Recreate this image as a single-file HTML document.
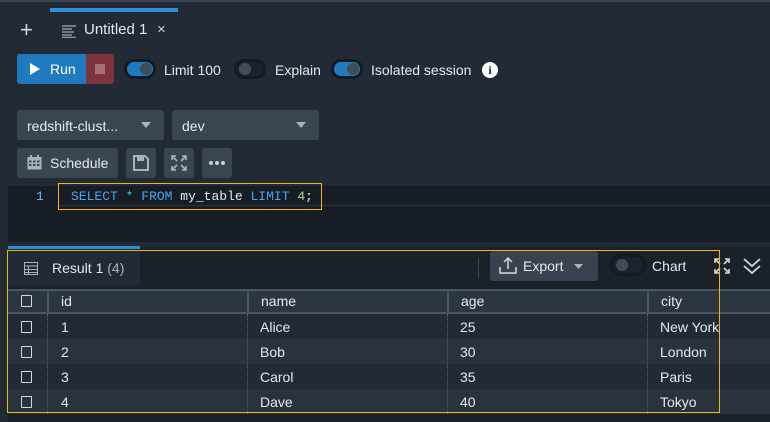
<!DOCTYPE html>
<html><head><style>
*{box-sizing:border-box;margin:0;padding:0}
body{width:770px;height:422px;background:#222a35;font-family:"Liberation Sans",sans-serif;color:#e6e9ec;position:relative;overflow:hidden;font-size:14px}
.a{position:absolute}
.btn{position:absolute;background:#3a4552;border-radius:3px}
.tg{position:absolute;width:32px;height:20px;border-radius:10px;border:3px solid #131a22}
.tg i{position:absolute;top:1px;width:12px;height:12px;border-radius:50%;background:#414c59}
.row{position:absolute;left:8px;width:762px;height:25px}
.c{position:absolute;font-size:14px;top:5px}
.cb{position:absolute;left:13px;top:7px;width:11px;height:12px;border:1px solid #d5d9de;border-radius:1px}
</style></head><body>
<div class="a" style="left:0;top:0;width:770px;height:2px;background:#3a4350"></div>
<div class="a" style="left:50px;top:8px;width:128px;height:4px;background:#2f8fd4"></div>
<div class="a" style="left:20px;top:17px;font-size:22px;color:#d5d9de">+</div>
<svg class="a" style="left:62px;top:24px" width="14" height="14"><g stroke="#8c96a0" stroke-width="1.6"><path d="M0 2H14M0 5H10M0 8H12M0 11H10M0 13.5H14"/></g></svg>
<div class="a" style="left:84px;top:21px;font-size:15px">Untitled 1</div>
<div class="a" style="left:157px;top:21px;font-size:15px;color:#c8cdd2">×</div>
<div class="a" style="left:17px;top:54px;width:69px;height:30px;background:#1f7ac0;border-radius:3px 0 0 3px"></div>
<svg class="a" style="left:30px;top:63px" width="10" height="12"><path d="M0 0L10 6L0 12Z" fill="#fff"/></svg>
<div class="a" style="left:50px;top:61px;font-size:14px;color:#fff">Run</div>
<div class="a" style="left:86px;top:54px;width:28px;height:30px;background:#7c343a;border-radius:0 3px 3px 0"></div>
<div class="a" style="left:95px;top:64px;width:10px;height:10px;background:#a47178"></div>
<div class="tg" style="left:124px;top:59px;background:#1f7ac0"><i style="left:13px"></i></div>
<div class="a" style="left:164px;top:62px">Limit 100</div>
<div class="tg" style="left:234px;top:59px;background:#1b222b"><i style="left:2px"></i></div>
<div class="a" style="left:275px;top:62px">Explain</div>
<div class="tg" style="left:331px;top:59px;background:#1f7ac0"><i style="left:13px"></i></div>
<div class="a" style="left:371px;top:62px">Isolated session</div>
<div class="a" style="left:482px;top:62px;width:16px;height:16px;border-radius:50%;background:#fff;color:#222a35;font-weight:bold;font-size:12px;text-align:center;line-height:16px;font-family:'Liberation Serif',serif">i</div>
<div class="btn" style="left:17px;top:110px;width:147px;height:30px"></div>
<div class="a" style="left:27px;top:118px">redshift-clust...</div>
<svg class="a" style="left:141px;top:122px" width="10" height="6"><path d="M0 0H10L5 6Z" fill="#aab3bc"/></svg>
<div class="btn" style="left:172px;top:110px;width:147px;height:30px"></div>
<div class="a" style="left:182px;top:118px">dev</div>
<svg class="a" style="left:296px;top:122px" width="10" height="6"><path d="M0 0H10L5 6Z" fill="#aab3bc"/></svg>
<div class="btn" style="left:17px;top:148px;width:101px;height:30px"></div>
<svg class="a" style="left:27px;top:155px" width="15" height="15"><rect x="0.5" y="2" width="14" height="12.5" fill="#aab3bc"/><g fill="#3a4552"><rect x="2" y="5.5" width="2.5" height="2"/><rect x="6" y="5.5" width="2.5" height="2"/><rect x="10" y="5.5" width="2.5" height="2"/><rect x="2" y="9" width="2.5" height="2"/><rect x="6" y="9" width="2.5" height="2"/><rect x="10" y="9" width="2.5" height="2"/></g><rect x="3" y="0" width="2" height="3" fill="#aab3bc"/><rect x="10" y="0" width="2" height="3" fill="#aab3bc"/></svg>
<div class="a" style="left:50px;top:155px">Schedule</div>
<div class="btn" style="left:126px;top:148px;width:30px;height:30px"></div>
<svg class="a" style="left:133px;top:155px" width="16" height="16"><path d="M1 1H12L15 4V15H1Z" fill="none" stroke="#aab3bc" stroke-width="2"/><rect x="4" y="2" width="7" height="4" fill="#aab3bc"/></svg>
<div class="btn" style="left:164px;top:148px;width:30px;height:30px"></div>
<svg class="a" style="left:171px;top:155px" width="16" height="16"><g stroke="#aab3bc" stroke-width="1.6" fill="none"><path d="M1 5V1H5M11 1H15V5M15 11V15H11M5 15H1V11M1 1L6 6M15 1L10 6M15 15L10 10M1 15L6 10"/></g></svg>
<div class="btn" style="left:202px;top:148px;width:30px;height:30px"></div>
<svg class="a" style="left:207px;top:160px" width="20" height="6"><g fill="#c8cdd2"><circle cx="4" cy="3" r="2"/><circle cx="10" cy="3" r="2"/><circle cx="16" cy="3" r="2"/></g></svg>
<div class="a" style="left:8px;top:186px;width:762px;height:56px;background:#161d25"></div>
<div class="a" style="left:58px;top:186px;width:712px;height:20px;border-bottom:1px solid #2a313a"></div>
<div class="a" style="left:36px;top:189px;font-family:'Liberation Mono',monospace;font-size:13px;color:#7fb3e0">1</div>
<div class="a" style="left:58px;top:183px;width:264px;height:27px;border:1px solid #f2b60e"></div>
<div class="a" style="left:71px;top:189px;font-family:'Liberation Mono',monospace;font-size:13px;color:#e6e9ec;white-space:pre"><span style="color:#4da3e8">SELECT</span> <span style="color:#3ed4b5">*</span> <span style="color:#4da3e8">FROM</span> my_table <span style="color:#4da3e8">LIMIT</span> <span style="color:#b5d58a">4</span>;</div>
<div class="a" style="left:8px;top:247px;width:762px;height:175px;background:#1a2129"></div>
<div class="a" style="left:8px;top:246px;width:132px;height:3px;background:#2f8fd4"></div>
<div class="a" style="left:8px;top:250px;width:132px;height:35px;background:#222a35"></div>
<svg class="a" style="left:24px;top:262px" width="14" height="13"><rect x="0.5" y="0.5" width="13" height="12" fill="none" stroke="#aab3bc"/><g stroke="#aab3bc"><path d="M0 4H14M0 7.5H14M0 10.5H14M4.5 4V13"/></g></svg>
<div class="a" style="left:52px;top:260px;font-size:14px">Result 1 <span style="color:#aab3bc">(4)</span></div>
<div class="a" style="left:478px;top:258px;width:1px;height:20px;background:#3a4350"></div>
<div class="a" style="left:490px;top:251px;width:108px;height:30px;background:#38434f;border-radius:3px"></div>
<svg class="a" style="left:499px;top:256px" width="18" height="18"><g stroke="#d5d9de" stroke-width="1.5" fill="none"><path d="M9 13V2M5 6L9 2L13 6M1 11V17H17V11"/></g></svg>
<div class="a" style="left:523px;top:258px">Export</div>
<svg class="a" style="left:574px;top:264px" width="9" height="5"><path d="M0 0H9L4.5 5Z" fill="#aab3bc"/></svg>
<div class="tg" style="left:610px;top:254px;width:36px;height:22px;border-radius:11px;background:#1b222b"><i style="left:3px;top:2px"></i></div>
<div class="a" style="left:652px;top:258px">Chart</div>
<svg class="a" style="left:714px;top:258px" width="16" height="16"><g stroke="#d5d9de" stroke-width="1.6" fill="none"><path d="M1 5V1H5M11 1H15V5M15 11V15H11M5 15H1V11M1 1L6 6M15 1L10 6M15 15L10 10M1 15L6 10"/></g></svg>
<svg class="a" style="left:743px;top:257px" width="18" height="18"><g stroke="#d5d9de" stroke-width="1.8" fill="none"><path d="M1 2L9 9L17 2M1 9L9 16L17 9"/></g></svg>
<div class="row" style="top:289px;height:25px;background:#2c3642;border-top:2px solid #4a5562;border-bottom:2px solid #4a5562"></div>
<div class="a" style="left:47px;top:289px;width:2px;height:25px;background:#4a5562"></div>
<div class="a" style="left:247px;top:289px;width:2px;height:25px;background:#4a5562"></div>
<div class="a" style="left:447px;top:289px;width:2px;height:25px;background:#4a5562"></div>
<div class="a" style="left:647px;top:289px;width:2px;height:25px;background:#4a5562"></div>
<div class="cb" style="left:21px;top:295px"></div>
<div class="a" style="left:61px;top:293px">id</div>
<div class="a" style="left:261px;top:293px">name</div>
<div class="a" style="left:461px;top:293px">age</div>
<div class="a" style="left:661px;top:293px">city</div>
<div class="row" style="top:314px;background:#222b35"><div class="cb"></div><div class="c" style="left:53px">1</div><div class="c" style="left:252px">Alice</div><div class="c" style="left:452px">25</div><div class="c" style="left:652px">New York</div></div>
<div class="row" style="top:339px;background:#29333e"><div class="cb"></div><div class="c" style="left:53px">2</div><div class="c" style="left:252px">Bob</div><div class="c" style="left:452px">30</div><div class="c" style="left:652px">London</div></div>
<div class="row" style="top:364px;background:#222b35"><div class="cb"></div><div class="c" style="left:53px">3</div><div class="c" style="left:252px">Carol</div><div class="c" style="left:452px">35</div><div class="c" style="left:652px">Paris</div></div>
<div class="row" style="top:389px;background:#29333e"><div class="cb"></div><div class="c" style="left:53px">4</div><div class="c" style="left:252px">Dave</div><div class="c" style="left:452px">40</div><div class="c" style="left:652px">Tokyo</div></div>
<div class="a" style="left:47px;top:314px;height:100px;border-left:1px dotted #5a6572"></div>
<div class="a" style="left:247px;top:314px;height:100px;border-left:1px dotted #5a6572"></div>
<div class="a" style="left:447px;top:314px;height:100px;border-left:1px dotted #5a6572"></div>
<div class="a" style="left:647px;top:314px;height:100px;border-left:1px dotted #5a6572"></div>
<div class="a" style="left:7px;top:250px;width:713px;height:163px;border:1px solid #f2b60e"></div>
</body></html>
